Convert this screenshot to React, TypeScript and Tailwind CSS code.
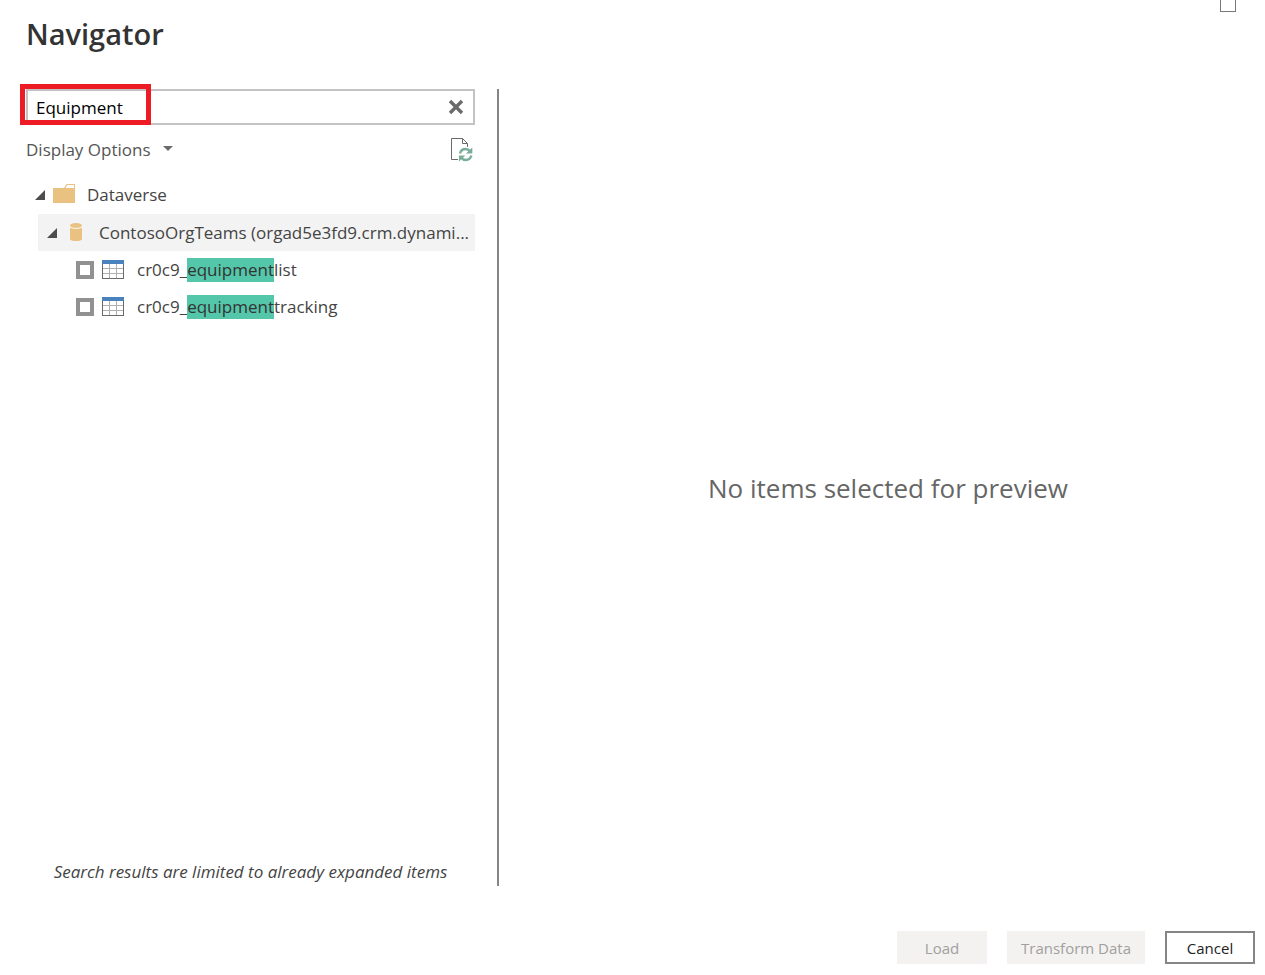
import { useState } from 'react';

type TableItem = { prefix: string; match: string; suffix: string };

const tables: TableItem[] = [
  { prefix: 'cr0c9_', match: 'equipment', suffix: 'list' },
  { prefix: 'cr0c9_', match: 'equipment', suffix: 'tracking' },
];

function ExpandedArrow() {
  return (
    <svg width="10" height="10" viewBox="0 0 10 10" aria-hidden="true">
      <path d="M10 0v10H0z" fill="#4d4d4d" />
    </svg>
  );
}

function FolderIcon() {
  return (
    <svg width="22" height="22" viewBox="0 0 22 22" aria-hidden="true">
      <path d="M0 4h11l2.500-4H22v19H0z" fill="#e9c282" />
      <path d="M12.400 4l1.800-3H21v3z" fill="#fff" />
    </svg>
  );
}

function DatabaseIcon() {
  return (
    <svg width="14" height="20" viewBox="0 0 14 20" aria-hidden="true">
      <path d="M1 4v12c0 1.400 2.500 2 6 2s6-.6 6-2V4z" fill="#e9c282" />
      <ellipse cx="7" cy="2.500" rx="6" ry="2.500" fill="#e9c282" />
      <path d="M.5 3.200C1.200 5 3.800 5.400 7 5.400s5.800-.4 6.500-2.200" fill="none" stroke="#f7f3ec" strokeWidth="1.200" />
    </svg>
  );
}

function TableIcon() {
  return (
    <svg width="22" height="19" viewBox="0 0 22 19" shapeRendering="crispEdges" aria-hidden="true">
      <path d="M.5 4v14.500h21V4" fill="#fff" stroke="#6a6a6a" />
      <path d="M7.500 4v14M14.500 4v14M1 8.500h20M1 13.500h20" stroke="#b0b0b0" fill="none" />
      <path d="M0 0h22v4H0z" fill="#4a82bd" />
    </svg>
  );
}

function RefreshIcon() {
  return (
    <svg width="22" height="24" viewBox="0 0 22 24" fill="none" aria-hidden="true">
      <path d="M7 21.500H.5V.5h11l5 5V9" stroke="#6a6a6a" />
      <path d="M11.500.5v5h5" stroke="#6a6a6a" />
      <path d="M9 15.500c.7-2.800 2.800-4.500 5.500-4.500 1.900 0 3.500.8 4.500 2.200" stroke="#78ad98" strokeWidth="2.400" />
      <path d="M21.300 9.500v6h-6.300z" fill="#78ad98" />
      <path d="M20.300 17.500c-.7 2.800-2.800 4.500-5.500 4.500-1.900 0-3.500-.8-4.500-2.200" stroke="#78ad98" strokeWidth="2.400" />
      <path d="M8 23.500v-6h6.300z" fill="#78ad98" />
    </svg>
  );
}

export default function App() {
  const [query, setQuery] = useState('Equipment');

  return (
    <div className="flex min-h-screen flex-col bg-white font-['Open_Sans','Noto_Sans',sans-serif] text-[17px] leading-6 text-[#444]">
      <header className="flex h-[89px] items-start justify-between pr-[29px] pl-[26px]">
        <h1 className="pt-3 text-[29px] leading-11 font-semibold text-[#333]">Navigator</h1>
        <button type="button" aria-label="Maximize" className="h-3 w-4 border border-t-0 border-[#777]" />
      </header>

      <main className="grid grow grid-cols-[minmax(0,473fr)_minmax(0,766fr)] pl-[26px]">
        <aside className="flex flex-col border-r-2 border-[#858585] pr-[22px]">
          <div className="relative flex h-9 items-center border-2 border-[#c3c3c3]">
            <input
              type="text"
              aria-label="Search"
              value={query}
              onChange={(e) => setQuery(e.target.value)}
              className="h-full min-w-0 grow pl-2 text-black outline-none"
            />
            <button type="button" aria-label="Clear search" onClick={() => setQuery('')} className="pr-[9px] pl-2">
              <svg width="16" height="16" viewBox="0 0 16 16" aria-hidden="true">
                <path d="M2 2l12 12M14 2L2 14" stroke="#6b6b6b" strokeWidth="3.400" />
              </svg>
            </button>
            <div className="pointer-events-none absolute -top-[7px] -left-2 h-[41px] w-[131px] border-5 border-[#ed1c24]" />
          </div>

          <div className="mb-[2px] flex h-[49px] items-center justify-between pr-[2px]">
            <button type="button" className="flex items-center gap-3 text-[#555]">
              Display Options
              <svg width="10" height="8" viewBox="0 0 10 8" aria-hidden="true">
                <path d="M0 0h10L5 5z" fill="#6b6b6b" />
              </svg>
            </button>
            <button type="button" aria-label="Refresh">
              <RefreshIcon />
            </button>
          </div>

          <ul>
            <li>
              <div className="flex h-[38px] items-center pl-[9px]">
                <button type="button" aria-label="Collapse Dataverse">
                  <ExpandedArrow />
                </button>
                <span className="mr-3 ml-2">
                  <FolderIcon />
                </span>
                Dataverse
              </div>
              <ul>
                <li>
                  <div className="ml-3 flex h-[37px] items-center bg-[#f3f3f3] pl-[9px]">
                    <button type="button" aria-label="Collapse ContosoOrgTeams">
                      <ExpandedArrow />
                    </button>
                    <span className="mr-4 ml-3">
                      <DatabaseIcon />
                    </span>
                    <span className="whitespace-nowrap">ContosoOrgTeams (orgad5e3fd9.crm.dynami...</span>
                  </div>
                  <ul className="pl-[50px]">
                    {tables.map((t) => (
                      <li key={t.suffix}>
                        <label className="flex h-[37px] items-center">
                          <input
                            type="checkbox"
                            className="size-[18px] shrink-0 appearance-none border-4 border-[#919191] bg-white checked:bg-[#444]"
                          />
                          <span className="mr-[13px] ml-2">
                            <TableIcon />
                          </span>
                          <span>
                            {t.prefix}
                            <mark className="inline-block bg-[#54c6a9] text-[#333]">{t.match}</mark>
                            {t.suffix}
                          </span>
                        </label>
                      </li>
                    ))}
                  </ul>
                </li>
              </ul>
            </li>
          </ul>

          <p className="mt-auto pb-[2px] text-center italic">Search results are limited to already expanded items</p>
        </aside>

        <section aria-label="Preview" className="flex items-center justify-center pl-3">
          <p className="text-[26px] leading-9 text-[#666]">No items selected for preview</p>
        </section>
      </main>

      <footer className="flex justify-end gap-5 pt-[45px] pr-[10px] pb-[11px] text-[15px]">
        <button type="button" disabled className="h-[33px] w-[90px] bg-[#f3f2f1] text-[#a19f9d]">
          Load
        </button>
        <button type="button" disabled className="h-[33px] w-[138px] bg-[#f3f2f1] text-[#a19f9d]">
          Transform Data
        </button>
        <button type="button" className="h-[33px] w-[90px] border-2 border-[#858585] text-[#222]">
          Cancel
        </button>
      </footer>
    </div>
  );
}
